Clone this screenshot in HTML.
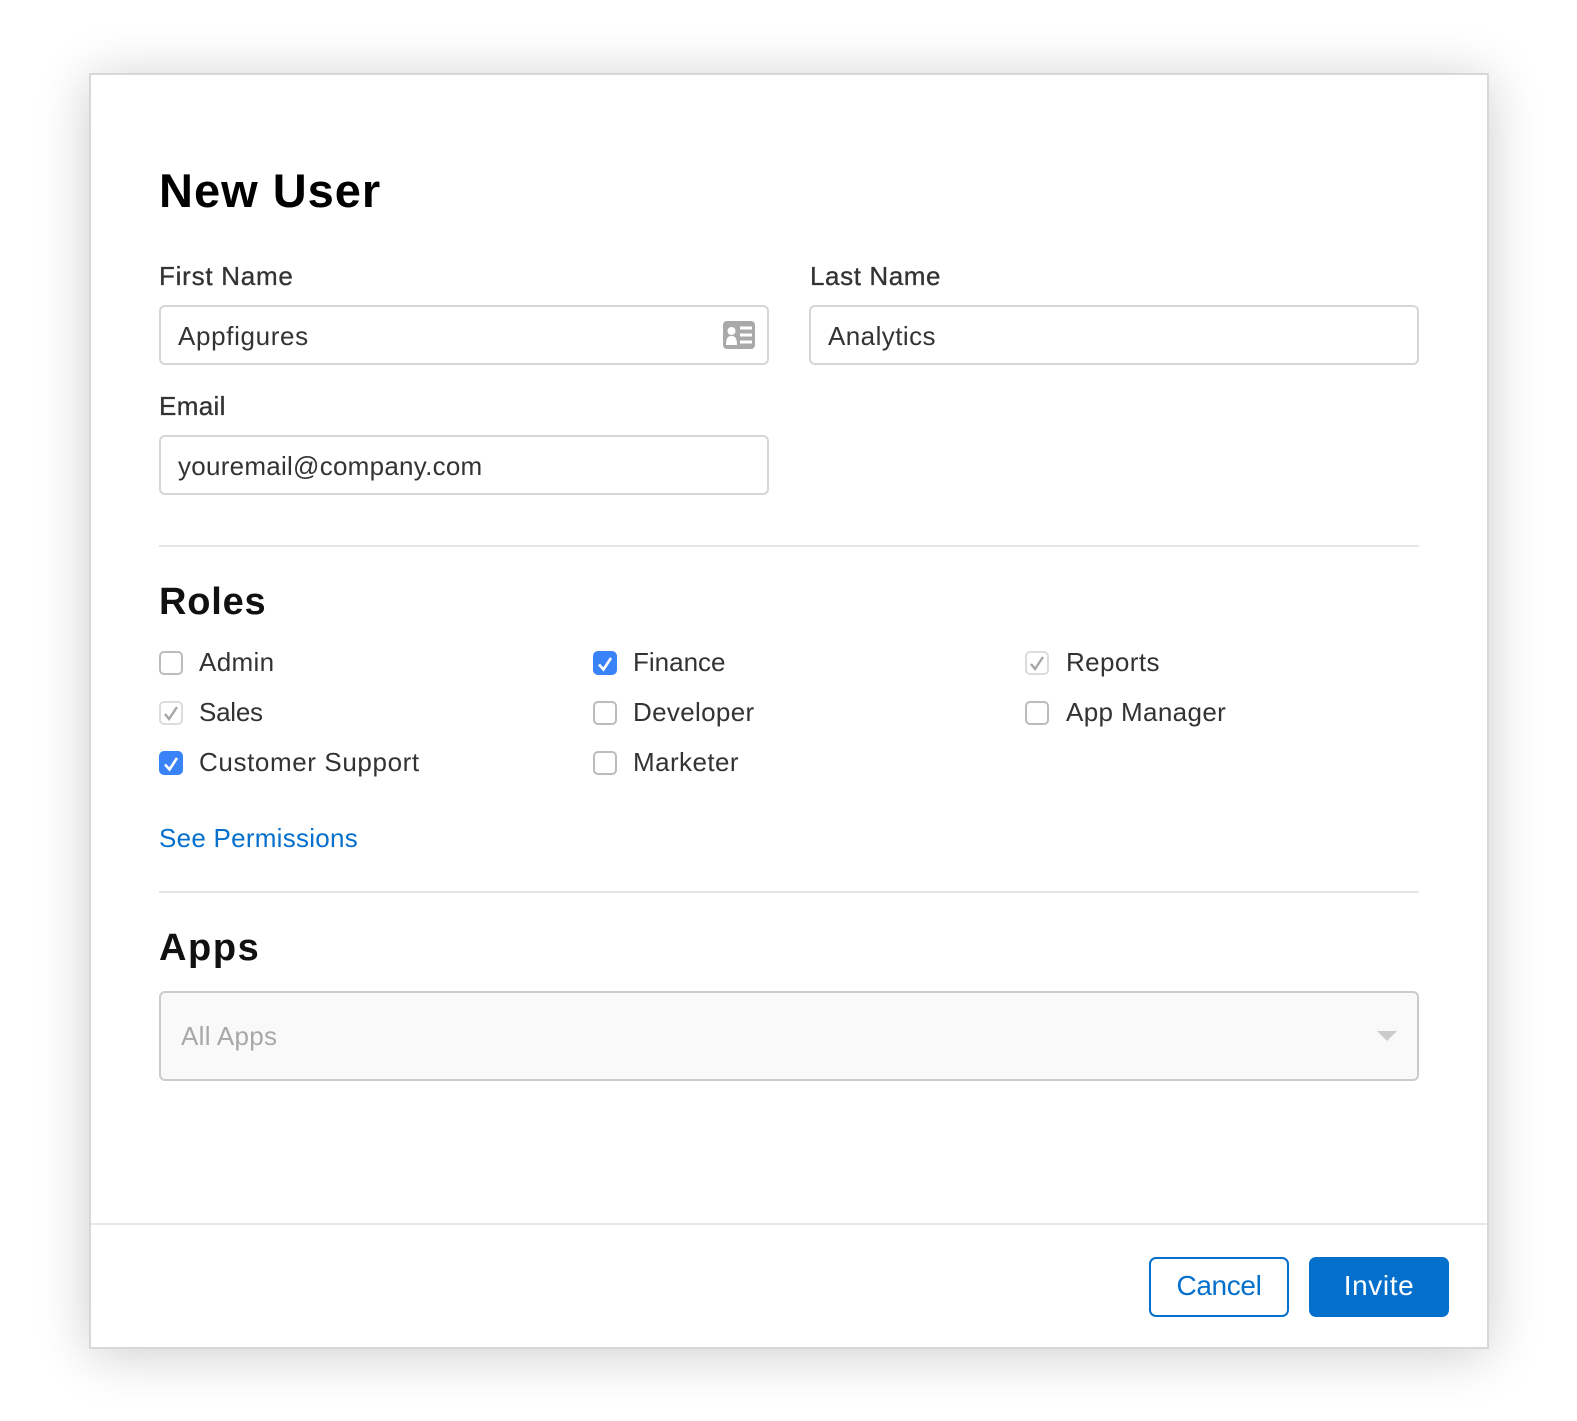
<!DOCTYPE html>
<html><head><meta charset="utf-8"><style>
html,body{margin:0;padding:0;background:#fff;width:1577px;height:1421px;overflow:hidden}
body{position:relative;font-family:"Liberation Sans",sans-serif;color:#333}
.t{position:absolute;white-space:nowrap;line-height:30px;height:30px;font-size:26px;color:#333}
.d{position:absolute;box-sizing:border-box;left:89px;top:73px;width:1400px;height:1276px;background:#fff;border:2px solid #d8d8d8;box-shadow:0 5px 50px rgba(0,0,0,.2)}
.i{position:absolute;box-sizing:border-box;background:#fff;border:2px solid #d6d6d6;border-radius:6px;height:60px;width:610px}
.h{position:absolute;height:2px;background:#e6e6e6;left:159px;width:1260px}
.h2{font-weight:700;font-size:38px;line-height:44px;height:44px;color:#111}
.c{position:absolute;box-sizing:border-box;width:24px;height:24px;border-radius:5px;background:#fff;border:2px solid #bcbcbc}
.c svg{position:absolute;left:-2px;top:-2px}
.g{border-color:#dcdcdc}
.b{background:#3a82f7;border-color:#3a82f7}
.lk{color:#0570cc}
.m{-webkit-text-stroke:.3px #333}
</style></head><body>
<div class="d"></div>
<div class="t" style="left:159px;top:166px;font-weight:700;font-size:47px;line-height:50px;height:50px;color:#000;letter-spacing:1px">New User</div>
<div class="t m" style="left:159px;top:261px;letter-spacing:.75px">First Name</div>
<div class="t m" style="left:810px;top:261px;letter-spacing:.6px">Last Name</div>
<div class="i" style="left:159px;top:305px"></div>
<div class="i" style="left:809px;top:305px"></div>
<div class="t" style="left:178px;top:321px;letter-spacing:.65px">Appfigures</div>
<div class="t" style="left:828px;top:321px;letter-spacing:.44px">Analytics</div>
<svg style="position:absolute;left:723px;top:321px" width="32" height="28" viewBox="0 0 32 28"><rect width="32" height="28" rx="4" fill="#a9a9a9"/><circle cx="8.500" cy="10" r="4" fill="#fff"/><path d="M3 24c0-7 2-9 5.500-9s5.500 2 5.500 9z" fill="#fff"/><path d="M17 7h12M17 14h12M17 21h12" stroke="#fff" stroke-width="3"/></svg>
<div class="t m" style="left:159px;top:391px;letter-spacing:.35px">Email</div>
<div class="i" style="left:159px;top:435px"></div>
<div class="t" style="left:178px;top:451px;letter-spacing:.26px">youremail@company.com</div>
<div class="h" style="top:545px"></div>
<div class="t h2" style="left:159px;top:580px;letter-spacing:.8px">Roles</div>
<div class="c" style="left:159px;top:651px"></div><div class="t" style="left:199px;top:647px;letter-spacing:.35px">Admin</div>
<div class="c g" style="left:159px;top:701px"><svg width="24" height="24"><path d="M6 13l4 5L18 6" fill="none" stroke="#a6a6a6" stroke-width="2.400"/></svg></div><div class="t" style="left:199px;top:697px;letter-spacing:-.25px">Sales</div>
<div class="c b" style="left:159px;top:751px"><svg width="24" height="24"><path d="M6 13.500l4.500 5L18 7" fill="none" stroke="#fff" stroke-width="2.600"/></svg></div><div class="t" style="left:199px;top:747px;letter-spacing:.61px">Customer Support</div>
<div class="c b" style="left:593px;top:651px"><svg width="24" height="24"><path d="M6 13.500l4.500 5L18 7" fill="none" stroke="#fff" stroke-width="2.600"/></svg></div><div class="t" style="left:633px;top:647px;letter-spacing:0">Finance</div>
<div class="c" style="left:593px;top:701px"></div><div class="t" style="left:633px;top:697px;letter-spacing:.33px">Developer</div>
<div class="c" style="left:593px;top:751px"></div><div class="t" style="left:633px;top:747px;letter-spacing:.42px">Marketer</div>
<div class="c g" style="left:1025px;top:651px"><svg width="24" height="24"><path d="M6 13l4 5L18 6" fill="none" stroke="#a6a6a6" stroke-width="2.400"/></svg></div><div class="t" style="left:1066px;top:647px;letter-spacing:.41px">Reports</div>
<div class="c" style="left:1025px;top:701px"></div><div class="t" style="left:1066px;top:697px;letter-spacing:.37px">App Manager</div>
<div class="t lk" style="left:159px;top:823px;letter-spacing:.26px">See Permissions</div>
<div class="h" style="top:891px"></div>
<div class="t h2" style="left:159px;top:926px;letter-spacing:1.6px">Apps</div>
<div class="i" style="left:159px;top:991px;width:1260px;height:90px;background:#f9f9f9;border-color:#cbcbcb"></div>
<div class="t" style="left:181px;top:1021px;color:#a8a8a8;letter-spacing:.3px">All Apps</div>
<svg style="position:absolute;left:1377px;top:1031px" width="20" height="10"><path d="M0 0h20L10 10z" fill="#cbcbcb"/></svg>
<div style="position:absolute;left:91px;top:1223px;width:1396px;height:2px;background:#e8e8e8"></div>
<div style="position:absolute;box-sizing:border-box;left:1149px;top:1257px;width:140px;height:60px;border:2px solid #0570cc;border-radius:7px"></div>
<div class="t lk" style="left:1149px;top:1271px;width:140px;text-align:center;font-size:28px;letter-spacing:-.35px">Cancel</div>
<div style="position:absolute;left:1309px;top:1257px;width:140px;height:60px;background:#0570cc;border-radius:7px"></div>
<div class="t" style="left:1309px;top:1271px;width:140px;text-align:center;font-size:28px;color:#fff;letter-spacing:.6px">Invite</div>
</body></html>
